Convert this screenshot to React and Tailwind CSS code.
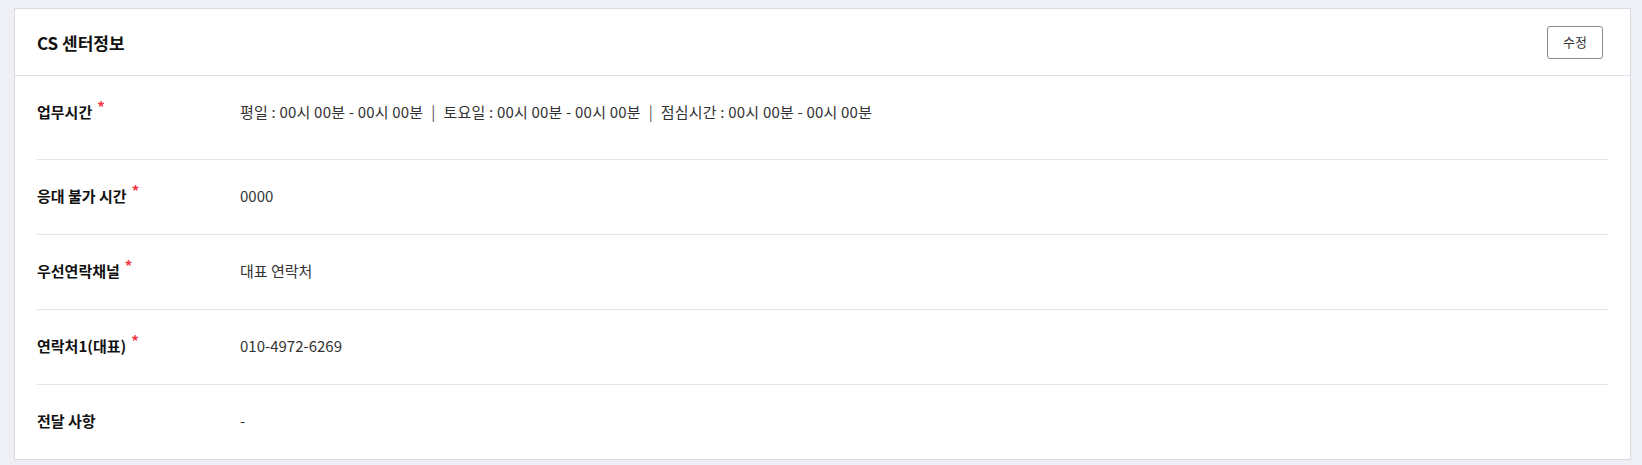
const ROWS = [
  { label: "업무시간", required: true, value: ["평일 : 00시 00분 - 00시 00분", "토요일 : 00시 00분 - 00시 00분", "점심시간 : 00시 00분 - 00시 00분"], tall: true },
  { label: "응대 불가 시간", required: true, value: ["0000"] },
  { label: "우선연락채널", required: true, value: ["대표 연락처"] },
  { label: "연락처1(대표)", required: true, value: ["010-4972-6269"] },
  { label: "전달 사항", required: false, value: ["-"] },
];

export default function App() {
  return (
    <div
      className="min-h-[465px] bg-[#eef0f5] pt-[8px] pl-[14px] pr-[11px] pb-[7px]"
      style={{ fontFamily: '"Noto Sans CJK KR", "Noto Sans", sans-serif' }}
    >
      <div className="bg-white border border-[#dadce2]">
        {/* 헤더 */}
        <div className="flex items-center justify-between h-[67px] pl-[22px] pr-[27px] border-b border-[#dfe1e6]">
          <h2 className="text-[17px] font-bold text-[#111] leading-none">CS 센터정보</h2>
          <button className="w-[56px] h-[33px] border border-[#8a8a8a] rounded-[3px] text-[13px] text-[#333] bg-white">
            수정
          </button>
        </div>
        {/* 정보 목록 */}
        <div className="px-[22px]">
          {ROWS.map((row, i) => (
            <div
              key={i}
              className={
                "flex pt-[26px] " +
                (row.tall ? "pb-[37px] " : "pb-[28px] ") +
                (i < ROWS.length - 1 ? "border-b border-[#e3e5ea]" : "")
              }
            >
              <div className="w-[203px] shrink-0 text-[15px] font-bold text-[#111] leading-[20px]">
                {row.label}
                {row.required && (
                  <span className="relative -top-[5px] ml-[5px] text-[#f5333f] text-[15px]">*</span>
                )}
              </div>
              <div className="flex items-center text-[15px] text-[#333] leading-[20px] whitespace-pre">
                {row.value.map((v, j) => (
                  <span key={j} className="flex items-center">
                    {j > 0 && <span className="mx-[8px] text-[#555]">|</span>}
                    <span className={row.tall ? "tracking-[0.2px]" : ""}>{v}</span>
                  </span>
                ))}
              </div>
            </div>
          ))}
        </div>
      </div>
    </div>
  );
}
